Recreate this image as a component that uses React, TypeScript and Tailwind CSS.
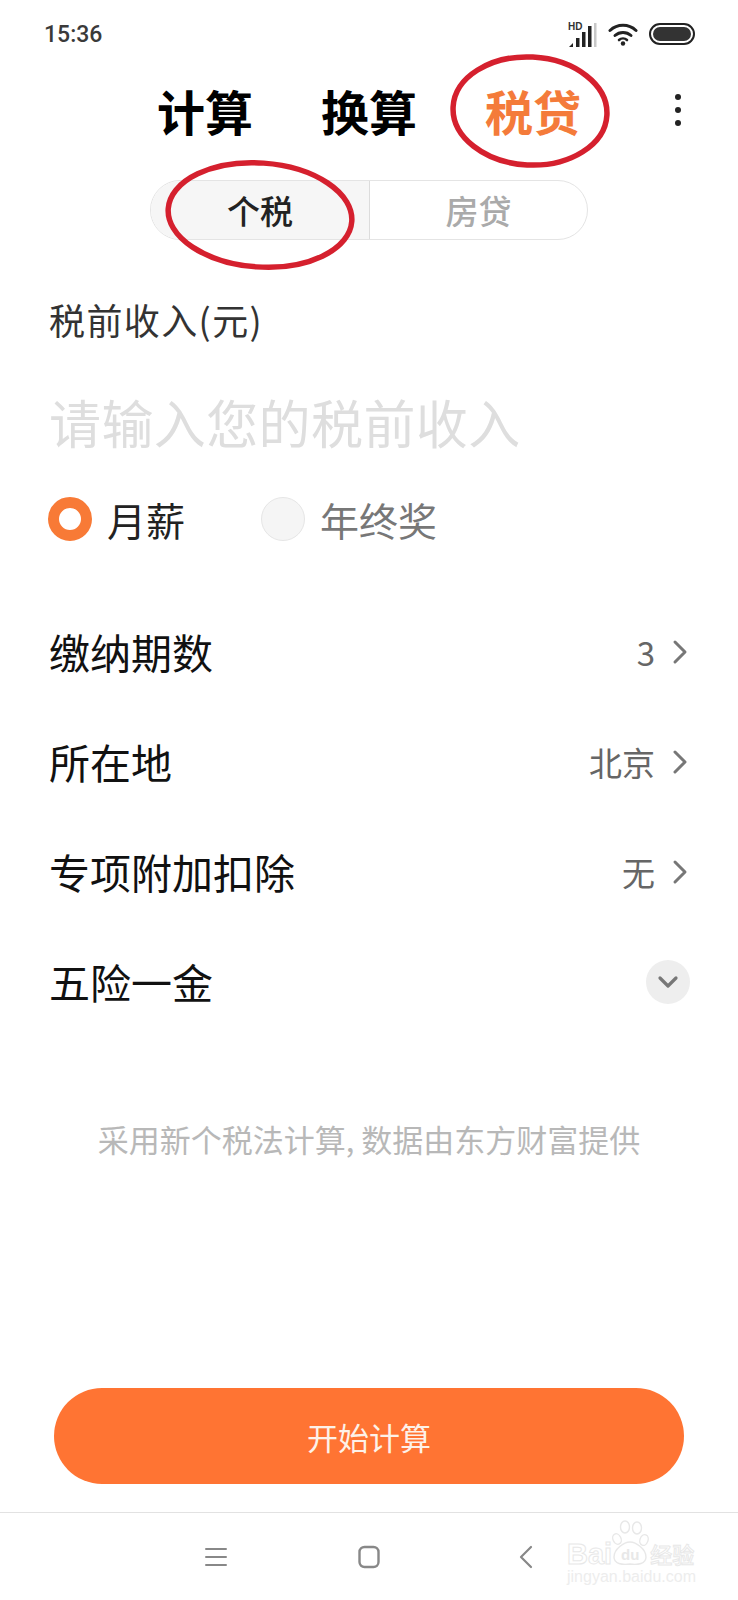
import React from "react";

const font = { fontFamily: '"Noto Sans CJK SC", "Noto Sans", sans-serif' };

function Chevron() {
  return (
    <svg width="16" height="26" viewBox="0 0 16 26" fill="none" className="ml-[17px]">
      <path d="M3 3l10 10L3 23" stroke="#777" strokeWidth="3" strokeLinecap="round" strokeLinejoin="round" />
    </svg>
  );
}

function Row({ label, value }: { label: string; value: string }) {
  return (
    <div className="flex h-[110px] items-center justify-between">
      <span className="relative top-[-1px] text-[41px] leading-none text-[#111]">{label}</span>
      <span className="flex items-center">
        <span className="text-[33px] leading-none text-[#666]">{value}</span>
        <Chevron />
      </span>
    </div>
  );
}

export default function App() {
  return (
    <div className="relative flex h-[1600px] w-[738px] flex-col overflow-hidden bg-white" style={font}>
      {/* status bar */}
      <div className="flex h-[68px] items-center justify-between pl-[44px] pr-[43px]">
        <span className="text-[23px] font-medium leading-none text-[#3a3a3a]" style={{ fontFamily: '"Roboto", sans-serif' }}>15:36</span>
        <span className="flex items-center gap-[11px]">
          <svg width="29" height="27" viewBox="0 0 29 27">
            <text x="0" y="9" fontSize="10" fontWeight="700" fill="#333" fontFamily="Liberation Sans">HD</text>
            <path d="M1 26l4-4v4z" fill="#222" />
            <rect x="8" y="17" width="3.5" height="9" fill="#222" />
            <rect x="14" y="11" width="3.5" height="15" fill="#222" />
            <rect x="20" y="5" width="3.5" height="21" fill="#222" />
            <rect x="26" y="2" width="2.5" height="24" fill="#c8c8c8" />
          </svg>
          <svg width="30" height="24" viewBox="0 0 30 24" fill="none">
            <path d="M2 8.5a19 19 0 0 1 26 0" stroke="#222" strokeWidth="3" strokeLinecap="round" />
            <path d="M7 13.5a12 12 0 0 1 16 0" stroke="#222" strokeWidth="3" strokeLinecap="round" />
            <path d="M11 18a6 6 0 0 1 8 0" stroke="#222" strokeWidth="2.6" strokeLinecap="round" />
            <circle cx="15" cy="21.5" r="2.2" fill="#222" />
          </svg>
          <span className="flex h-[22px] w-[46px] items-center justify-center rounded-full border-2 border-[#222] p-[2px]">
            <span className="h-full w-full rounded-full bg-[#333]" />
          </span>
        </span>
      </div>

      {/* main tabs */}
      <div className="relative flex h-[84px] items-center pl-[157px]">
        <span className="text-[48px] font-bold leading-none text-black">计算</span>
        <span className="ml-[68px] text-[48px] font-bold leading-none text-black">换算</span>
        <span className="ml-[68px] text-[48px] font-bold leading-none text-[#f47b3a]">税贷</span>
        <span className="ml-[94px] flex flex-col gap-[7px]">
          <span className="h-[6px] w-[6px] rounded-full bg-[#222]" />
          <span className="h-[6px] w-[6px] rounded-full bg-[#222]" />
          <span className="h-[6px] w-[6px] rounded-full bg-[#222]" />
        </span>
      </div>

      {/* segment */}
      <div className="ml-[150px] mt-[28px] flex h-[60px] w-[438px] overflow-hidden rounded-full border border-[#e4e4e4]">
        <div className="flex w-[219px] items-center justify-center border-r border-[#dcdcdc] bg-[#f6f6f6] text-[33px] font-medium leading-none text-[#222]">个税</div>
        <div className="flex flex-1 items-center justify-center text-[33px] font-medium leading-none text-[#aaa]">房贷</div>
      </div>

      {/* form */}
      <div className="px-[49px]">
        <div className="mt-[54px] text-[36px] leading-[50px] tracking-[1.4px] text-[#333]">税前收入(元)</div>
        <div className="mt-[43px] text-[52px] leading-[70px] tracking-[0.4px] text-[#dedede]">请输入您的税前收入</div>
        <div className="mt-[37px] flex h-[50px] items-center">
          <span className="-ml-[1px] h-[44px] w-[44px] rounded-full border-[11px] border-[#f87a36] bg-white" />
          <span className="ml-[15px] text-[39px] leading-none text-[#222]">月薪</span>
          <span className="ml-[76px] h-[44px] w-[44px] rounded-full border border-[#e6e6e6] bg-[#f5f5f5]" />
          <span className="ml-[15px] text-[39px] leading-none text-[#777]">年终奖</span>
        </div>
      </div>

      {/* rows */}
      <div className="mt-[53px] pl-[49px] pr-[50px]">
        <Row label="缴纳期数" value="3" />
        <Row label="所在地" value="北京" />
        <Row label="专项附加扣除" value="无" />
        <div className="flex h-[110px] items-center justify-between">
          <span className="relative top-[-1px] text-[41px] leading-none text-[#111]">五险一金</span>
          <span className="-mr-[2px] flex h-[44px] w-[44px] items-center justify-center rounded-full bg-[#eeeeee]">
            <svg width="22" height="14" viewBox="0 0 22 14" fill="none">
              <path d="M3 3l8 8 8-8" stroke="#777" strokeWidth="3.2" strokeLinecap="round" strokeLinejoin="round" />
            </svg>
          </span>
        </div>
      </div>

      {/* note */}
      <div className="mt-[82px] text-center text-[31px] leading-[40px] text-[#b8b8b8]">采用新个税法计算, 数据由东方财富提供</div>

      <div className="flex-1" />

      {/* button */}
      <div className="mx-[54px] mb-[28px] flex h-[96px] items-center justify-center rounded-full bg-[#ff7433] text-[31px] leading-none text-[#fdf1e8]">开始计算</div>

      {/* nav */}
      <div className="relative flex h-[88px] items-center border-t border-[#e2e2e2] pl-[205px]">
        <svg width="22" height="20" viewBox="0 0 22 20" fill="none">
          <path d="M1 2h20M1 10h20M1 18h20" stroke="#888" strokeWidth="2" strokeLinecap="round" />
        </svg>
        <svg width="22" height="24" viewBox="0 0 22 24" fill="none" className="ml-[131px]">
          <rect x="1.5" y="2" width="19" height="20" rx="5" stroke="#888" strokeWidth="2.4" />
        </svg>
        <svg width="14" height="24" viewBox="0 0 14 24" fill="none" className="ml-[139px]">
          <path d="M12 2L2 12l10 10" stroke="#888" strokeWidth="2.2" strokeLinecap="round" strokeLinejoin="round" />
        </svg>

        {/* watermark */}
        <div className="absolute left-[567px] top-[7px] flex w-[132px] flex-col">
          <div className="flex h-[46px] items-end">
            <span className="text-[29px] font-bold leading-[24px] text-white [-webkit-text-stroke:1px_#e8e8e8]" style={{ fontFamily: '"Liberation Sans", sans-serif' }}>Bai</span>
            <svg width="38" height="46" viewBox="0 0 38 46" fill="none" className="-ml-[1px]">
              <ellipse cx="6" cy="19" rx="4" ry="5.5" stroke="#e8e8e8" strokeWidth="1.4" transform="rotate(-25 6 19)" />
              <ellipse cx="14" cy="7" rx="4.5" ry="6" stroke="#e8e8e8" strokeWidth="1.4" />
              <ellipse cx="26" cy="8" rx="4.5" ry="6" stroke="#e8e8e8" strokeWidth="1.4" />
              <ellipse cx="33" cy="20" rx="4" ry="5.5" stroke="#e8e8e8" strokeWidth="1.4" transform="rotate(20 33 20)" />
              <path d="M3 37c0-8 10-15 16-15s16 7 16 15c0 7-8 8-16 7-8 1-16 0-16-7z" stroke="#e8e8e8" strokeWidth="1.4" />
              <text x="10" y="40" fontSize="15" fontWeight="700" fill="#e8e8e8" fontFamily="Liberation Sans">du</text>
            </svg>
            <span className="ml-[1px] text-[22px] font-medium leading-[25px] text-white [-webkit-text-stroke:1px_#e8e8e8]">经验</span>
          </div>
          <div className="mt-[3px] text-[16px] leading-[16px] text-[#ededed]" style={{ fontFamily: '"Liberation Sans", sans-serif' }}>jingyan.baidu.com</div>
        </div>
      </div>

      {/* red hand-drawn ellipses */}
      <svg width="738" height="300" viewBox="0 0 738 300" fill="none" className="pointer-events-none absolute left-0 top-0">
        <ellipse cx="530" cy="111" rx="77" ry="54" stroke="#d5202e" strokeWidth="5.5" transform="rotate(3 530 111)" />
        <ellipse cx="260" cy="215" rx="92" ry="52" stroke="#d5202e" strokeWidth="5.5" transform="rotate(4 260 215)" />
      </svg>
    </div>
  );
}
